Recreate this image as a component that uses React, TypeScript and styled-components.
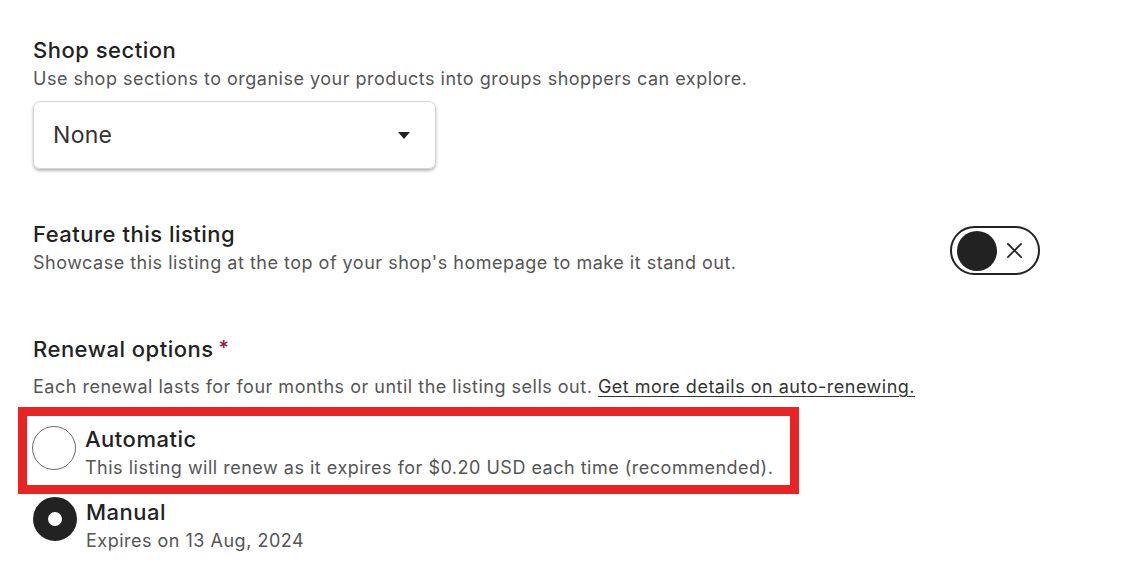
import React from 'react';
import styled, { createGlobalStyle } from 'styled-components';

const GlobalStyle = createGlobalStyle`
  body {
    margin: 0;
    background: #ffffff;
    font-family: 'Inter', 'Liberation Sans', sans-serif;
    color: #222222;
  }
`;

// Page wrapper
const Page = styled.div`
  width: 1007px;
  padding: 36px 0 0 33px;
`;

const Section = styled.section<{ gap: number }>`
  margin-bottom: ${p => p.gap}px;
`;

const SectionRow = styled.div`
  display: flex;
  align-items: center;
  justify-content: space-between;
`;

const Title = styled.h2`
  margin: 0;
  font-size: 22px;
  line-height: 28px;
  font-weight: 500;
  letter-spacing: 0.5px;
  color: #222222;
`;

const Required = styled.span`
  color: #a3153c;
  margin-left: 5px;
  font-size: 20px;
  vertical-align: 2px;
`;

const Description = styled.p<{ top?: number }>`
  margin: ${p => p.top ?? 3}px 0 0 0;
  font-size: 18px;
  line-height: 24px;
  letter-spacing: 0.5px;
  color: #555555;
`;

const DetailsLink = styled.a`
  color: #333333;
  text-decoration: underline;
  text-underline-offset: 3px;
  cursor: pointer;
`;

// Select
const SelectBox = styled.div`
  margin-top: 10px;
  width: 403px;
  height: 68px;
  box-sizing: border-box;
  border: 1px solid #d4d4d4;
  border-radius: 7px;
  box-shadow: 0 2px 3px rgba(0, 0, 0, 0.28);
  display: flex;
  align-items: center;
  justify-content: space-between;
  padding: 0 25px 0 19px;
  font-size: 23px;
  letter-spacing: 0.3px;
  color: #333333;
`;

const Caret = styled.span`
  width: 0;
  height: 0;
  border-left: 6px solid transparent;
  border-right: 6px solid transparent;
  border-top: 7px solid #222222;
`;

// Toggle
const Toggle = styled.div`
  width: 90px;
  height: 49px;
  box-sizing: border-box;
  border: 2px solid #222222;
  border-radius: 25px;
  display: flex;
  align-items: center;
  padding-left: 5px;
  gap: 9px;
  margin-top: 6px;
`;

const Knob = styled.span`
  width: 40px;
  height: 40px;
  border-radius: 50%;
  background: #222222;
`;

// Radios
const Options = styled.div`
  margin-top: 8px;
  display: flex;
  flex-direction: column;
`;

const Highlight = styled.div`
  margin-left: -15px;
  width: 781px;
  box-sizing: border-box;
  border: 9px solid #ea2424;
  padding: 0 0 5px 5px;
`;

const Option = styled.label<{ pad: number }>`
  display: flex;
  gap: 9px;
  padding-top: ${p => p.pad}px;
`;

const Radio = styled.span<{ checked?: boolean; offset: number }>`
  flex: none;
  width: 44px;
  height: 44px;
  box-sizing: border-box;
  border-radius: 50%;
  margin-top: ${p => p.offset}px;
  border: ${p => (p.checked ? '15px solid #222222' : '1.5px solid #6b6b6b')};
  background: #ffffff;
`;

const OptionText = styled.div`
  display: flex;
  flex-direction: column;
`;

const OptionLabel = styled.span`
  font-size: 22px;
  line-height: 28px;
  font-weight: 500;
  letter-spacing: 0.5px;
  color: #222222;
  margin-bottom: 3px;
`;

const OptionHint = styled.span`
  font-size: 18px;
  line-height: 24px;
  letter-spacing: 0.5px;
  color: #555555;
`;

const App: React.FC = () => (
  <>
    <GlobalStyle />
    <Page>
      <Section gap={51}>
        <Title>Shop section</Title>
        <Description>Use shop sections to organise your products into groups shoppers can explore.</Description>
        <SelectBox>
          None
          <Caret />
        </SelectBox>
      </Section>

      <Section gap={59}>
        <SectionRow>
          <div>
            <Title>Feature this listing</Title>
            <Description>Showcase this listing at the top of your shop's homepage to make it stand out.</Description>
          </div>
          <Toggle>
            <Knob />
            <svg width="17" height="17" viewBox="0 0 18 18" fill="none" stroke="#222" strokeWidth="1.8" strokeLinecap="round">
              <path d="M2 2l14 14M16 2L2 16" />
            </svg>
          </Toggle>
        </SectionRow>
      </Section>

      <Section gap={0}>
        <Title>
          Renewal options<Required>*</Required>
        </Title>
        <Description top={12}>
          Each renewal lasts for four months or until the listing sells out.{' '}
          <DetailsLink>Get more details on auto-renewing.</DetailsLink>
        </Description>
        <Options>
          <Highlight>
            <Option pad={9}>
              <Radio offset={1} />
              <OptionText>
                <OptionLabel>Automatic</OptionLabel>
                <OptionHint>This listing will renew as it expires for $0.20 USD each time (recommended).</OptionHint>
              </OptionText>
            </Option>
          </Highlight>
          <Option pad={4}>
            <Radio checked offset={-1} />
            <OptionText>
              <OptionLabel>Manual</OptionLabel>
              <OptionHint>Expires on 13 Aug, 2024</OptionHint>
            </OptionText>
          </Option>
        </Options>
      </Section>
    </Page>
  </>
);

export default App;
